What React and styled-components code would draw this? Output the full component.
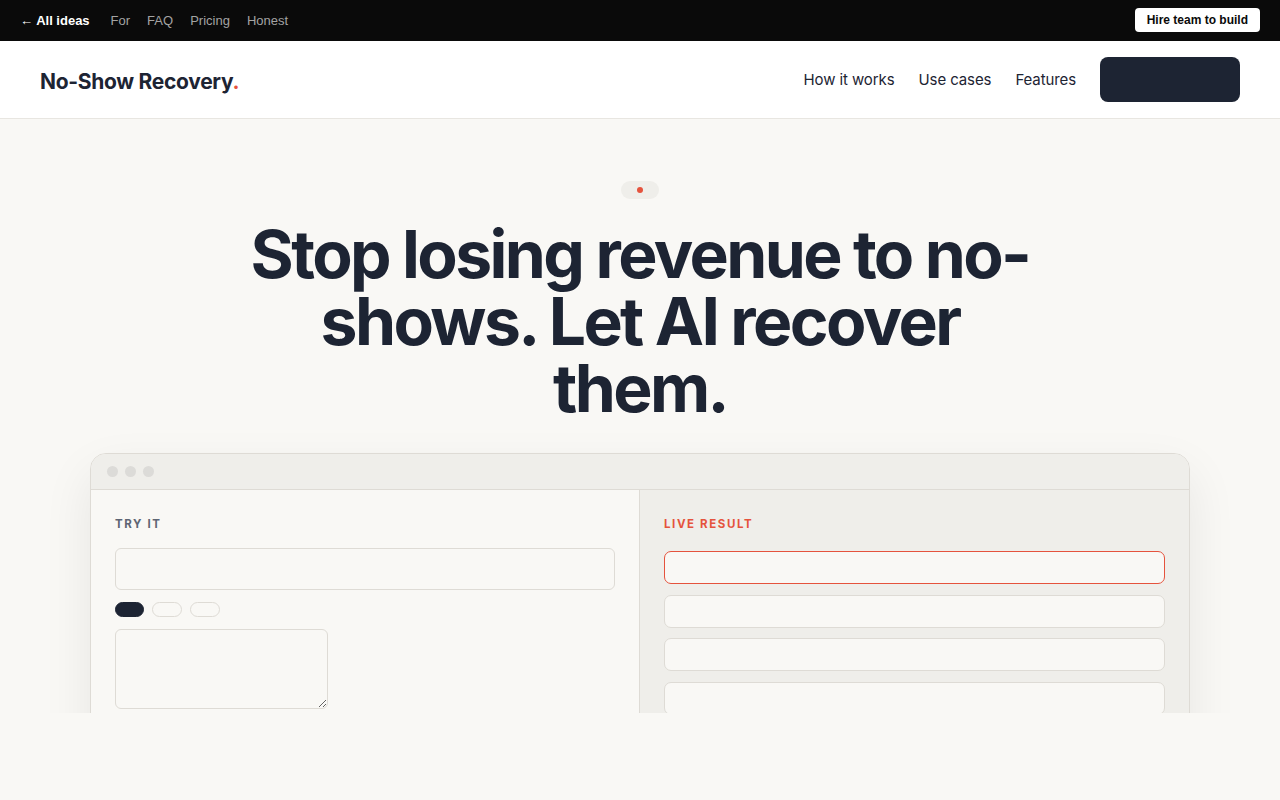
import React from 'react'
import styled, { createGlobalStyle } from 'styled-components'

const ink = '#1d2433'
const accent = '#e5533d'
const paper = '#f9f8f5'
const sand = '#efeeea'
const line = '#dedbd5'

const GlobalStyle = createGlobalStyle`
    * { box-sizing: border-box; }
    body {
        margin: 0;
        background: ${paper};
        font-family: Inter, "Noto Sans", sans-serif;
        color: ${ink};
    }
`

const TopBar = styled.div`
    height: 41px;
    background: #0a0a0a;
    display: flex;
    align-items: center;
    justify-content: space-between;
    padding: 0 20px 1px;
    font-family: "Liberation Sans", Arial, sans-serif;
    font-size: 13px;
`

const TopLinks = styled.div`
    display: flex;
    align-items: center;
    gap: 17px;
    a {
        color: #a3a3a3;
        text-decoration: none;
    }
    a.back {
        color: #fff;
        font-weight: 700;
        margin-right: 4px;
    }
`

const HireButton = styled.button`
    background: #fff;
    color: #0a0a0a;
    border: 0;
    border-radius: 4px;
    height: 24px;
    padding: 0 12px;
    font-family: inherit;
    font-size: 12px;
    font-weight: 700;
`

const Nav = styled.header`
    height: 78px;
    background: #fff;
    border-bottom: 1px solid #e8e6e1;
    display: flex;
    align-items: center;
    justify-content: space-between;
    padding: 0 40px;
`

const Logo = styled.div`
    padding-top: 3px;
    font-size: 21px;
    font-weight: 700;
    letter-spacing: -0.3px;
    span { color: ${accent}; }
`

const NavLinks = styled.nav`
    display: flex;
    align-items: center;
    gap: 24px;
    a {
        color: ${ink};
        text-decoration: none;
        font-size: 15px;
        letter-spacing: -0.1px;
    }
`

const NavCta = styled.button`
    width: 140px;
    height: 45px;
    background: ${ink};
    color: ${ink};
    border: 0;
    border-radius: 8px;
    font-size: 15px;
`

const Hero = styled.section`
    height: 594px;
    overflow: hidden;
    padding-top: 62px;
    display: flex;
    flex-direction: column;
    align-items: center;
    & > * { flex-shrink: 0; }
`

const Badge = styled.div`
    width: 38px;
    height: 18px;
    border-radius: 9px;
    background: ${sand};
    display: flex;
    align-items: center;
    justify-content: center;
    &::before {
        content: '';
        width: 6px;
        height: 6px;
        border-radius: 50%;
        background: ${accent};
    }
`

const Headline = styled.h1`
    margin: 22px 0 0;
    max-width: 820px;
    text-align: center;
    font-size: 66px;
    line-height: 67px;
    font-weight: 700;
    letter-spacing: -2.6px;
`

const Window = styled.div`
    margin-top: 31px;
    width: 1100px;
    border: 1px solid ${line};
    border-radius: 16px;
    overflow: hidden;
    background: ${paper};
    box-shadow: 0 20px 50px rgba(30, 30, 20, 0.08);
`

const TitleBar = styled.div`
    height: 36px;
    background: ${sand};
    border-bottom: 1px solid ${line};
    display: flex;
    align-items: center;
    gap: 7px;
    padding-left: 16px;
`

const Dot = styled.span`
    width: 11px;
    height: 11px;
    border-radius: 50%;
    background: #dcdbd8;
`

const Panes = styled.div`
    display: grid;
    grid-template-columns: 548px 1fr;
    min-height: 300px;
`

const Pane = styled.div`
    padding: 27px 24px;
    background: ${p => (p.$shade ? sand : paper)};
    border-left: ${p => (p.$shade ? `1px solid ${line}` : 'none')};
    display: flex;
    flex-direction: column;
    align-items: flex-start;
`

const Label = styled.div`
    font-size: 11.5px;
    font-weight: 700;
    letter-spacing: 1.6px;
    color: ${p => (p.$red ? accent : '#5e6573')};
    margin-bottom: ${p => (p.$red ? 20 : 17)}px;
`

const Field = styled.div`
    width: 100%;
    height: 42px;
    border: 1px solid ${line};
    border-radius: 6px;
    background: ${paper};
`

const Chips = styled.div`
    display: flex;
    gap: 8px;
    margin: 12px 0;
`

const Chip = styled.span`
    width: ${p => (p.$on ? 29 : 30)}px;
    height: 15px;
    border-radius: 8px;
    background: ${p => (p.$on ? ink : 'transparent')};
    border: 1px solid ${p => (p.$on ? ink : line)};
`

const Notes = styled.textarea`
    width: 213px;
    height: 80px;
    border: 1px solid ${line};
    border-radius: 6px;
    background: ${paper};
`

const Results = styled.div`
    width: 100%;
    display: flex;
    flex-direction: column;
    gap: 10.5px;
`

const ResultRow = styled.div`
    height: 33px;
    border: 1px solid ${p => (p.$active ? accent : line)};
    border-radius: 7px;
    background: ${paper};
`

export default function App() {
    return (
        <>
            <GlobalStyle />
            <TopBar>
                <TopLinks>
                    <a className='back' href='#'>← All ideas</a>
                    <a href='#'>For</a>
                    <a href='#'>FAQ</a>
                    <a href='#'>Pricing</a>
                    <a href='#'>Honest</a>
                </TopLinks>
                <HireButton>Hire team to build</HireButton>
            </TopBar>
            <Nav>
                <Logo>No-Show Recovery<span>.</span></Logo>
                <NavLinks>
                    <a href='#'>How it works</a>
                    <a href='#'>Use cases</a>
                    <a href='#'>Features</a>
                    <NavCta>Start free trial</NavCta>
                </NavLinks>
            </Nav>
            <Hero>
                <Badge />
                <Headline>Stop losing revenue to no-shows. Let AI recover them.</Headline>
                <Window>
                    <TitleBar>
                        <Dot /><Dot /><Dot />
                    </TitleBar>
                    <Panes>
                        <Pane>
                            <Label>TRY IT</Label>
                            <Field />
                            <Chips>
                                <Chip $on />
                                <Chip />
                                <Chip />
                            </Chips>
                            <Notes />
                        </Pane>
                        <Pane $shade>
                            <Label $red>LIVE RESULT</Label>
                            <Results>
                                <ResultRow $active />
                                <ResultRow />
                                <ResultRow />
                                <ResultRow />
                            </Results>
                        </Pane>
                    </Panes>
                </Window>
            </Hero>
        </>
    )
}
